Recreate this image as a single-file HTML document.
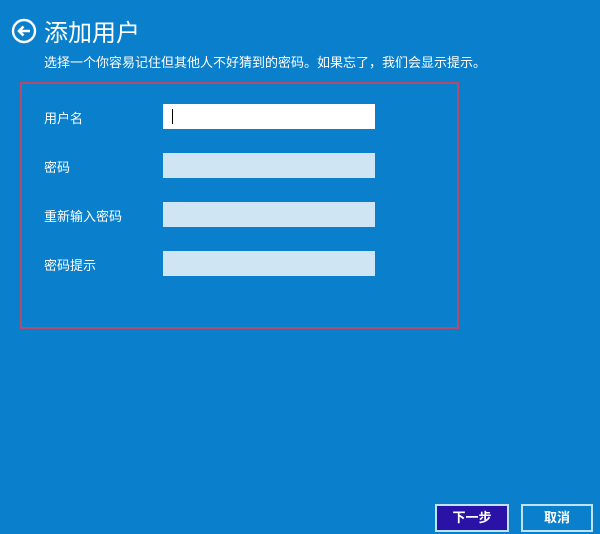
<!DOCTYPE html>
<html><head><meta charset="utf-8"><style>
body{margin:0;width:600px;height:534px;background:#0a7fcb;position:relative;overflow:hidden;font-family:"Liberation Sans","Noto Sans CJK SC",sans-serif;color:#fff}
.a{position:absolute}
.lab{position:absolute;left:44px;font-size:13px}
.in{position:absolute;left:163px;width:212px;height:25px;background:#cfe5f4}
.btn{position:absolute;top:504px;height:24px;border:2px solid #bfe3f5;font-size:13px;font-weight:bold;text-align:center;line-height:24px;box-sizing:content-box}
</style></head><body>
<svg class="a" style="left:11px;top:18px" width="26" height="26" viewBox="0 0 26 26"><circle cx="13" cy="13" r="11" fill="none" stroke="#fff" stroke-width="2.4"/><path d="M19 13H8M12.5 8.5L8 13l4.5 4.5" fill="none" stroke="#fff" stroke-width="2.6"/></svg>
<div class="a" style="left:44px;top:13px;font-size:24px">添加用户</div>
<div class="a" style="left:44px;top:52px;font-size:13px">选择一个你容易记住但其他人不好猜到的密码。如果忘了，我们会显示提示。</div>
<div class="a" style="left:20px;top:82px;width:435px;height:243px;border:2px solid #b54a6a"></div>
<div class="lab" style="top:108px">用户名</div>
<div class="lab" style="top:157px">密码</div>
<div class="lab" style="top:206px">重新输入密码</div>
<div class="lab" style="top:255px">密码提示</div>
<div class="in" style="top:104px;background:#fff"><div class="a" style="left:9px;top:5px;width:1px;height:15px;background:#000"></div></div>
<div class="in" style="top:153px"></div>
<div class="in" style="top:202px"></div>
<div class="in" style="top:251px"></div>
<div class="btn" style="left:435px;width:70px;background:#2b12a6">下一步</div>
<div class="btn" style="left:521px;width:68px">取消</div>
</body></html>
